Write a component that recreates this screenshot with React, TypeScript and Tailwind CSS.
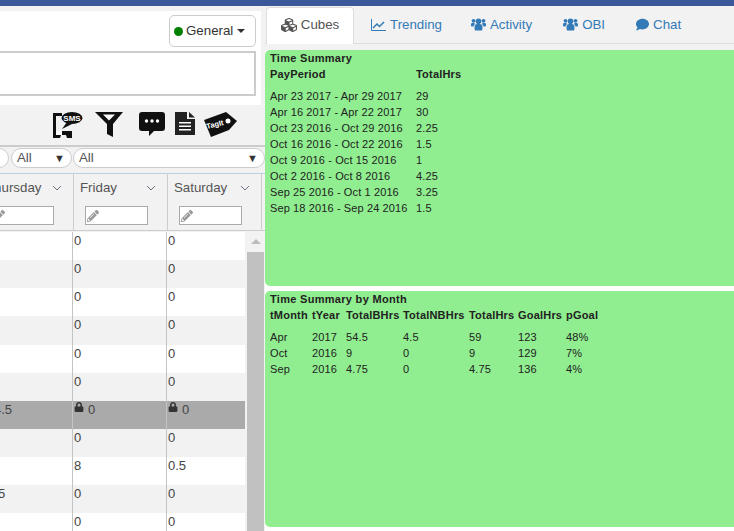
import { FaCubes, FaComment, FaPencilAlt, FaLock } from "react-icons/fa";

const timeRows = [
  ["Apr 23 2017 - Apr 29 2017", "29"],
  ["Apr 16 2017 - Apr 22 2017", "30"],
  ["Oct 23 2016 - Oct 29 2016", "2.25"],
  ["Oct 16 2016 - Oct 22 2016", "1.5"],
  ["Oct 9 2016 - Oct 15 2016", "1"],
  ["Oct 2 2016 - Oct 8 2016", "4.25"],
  ["Sep 25 2016 - Oct 1 2016", "3.25"],
  ["Sep 18 2016 - Sep 24 2016", "1.5"],
];

const monthHead = ["tMonth", "tYear", "TotalBHrs", "TotalNBHrs", "TotalHrs", "GoalHrs", "pGoal"];
const monthRows = [
  ["Apr", "2017", "54.5", "4.5", "59", "123", "48%"],
  ["Oct", "2016", "9", "0", "9", "129", "7%"],
  ["Sep", "2016", "4.75", "0", "4.75", "136", "4%"],
];

const gridRows = [
  { thu: "0", fri: "0", sat: "0", h: "h-[28px]" },
  { thu: "0", fri: "0", sat: "0", h: "h-[28px]" },
  { thu: "0", fri: "0", sat: "0", h: "h-[28px]" },
  { thu: "0", fri: "0", sat: "0", h: "h-[29px]" },
  { thu: "0", fri: "0", sat: "0", h: "h-[28px]" },
  { thu: "0", fri: "0", sat: "0", h: "h-[28px]" },
  { thu: "4.5", fri: "0", sat: "0", h: "h-[28px]", locked: true },
  { thu: "0", fri: "0", sat: "0", h: "h-[28px]" },
  { thu: "0", fri: "8", sat: "0.5", h: "h-[28px]" },
  { thu: "4.25", fri: "0", sat: "0", h: "h-[28px]" },
  { thu: "0", fri: "0", sat: "0", h: "h-[28px]" },
];

function Chevron() {
  return (
    <svg width="10" height="6" viewBox="0 0 10 6" className="text-gray-500">
      <path d="M1 1l4 4 4-4" fill="none" stroke="currentColor" strokeWidth="1" />
    </svg>
  );
}

function UsersIcon() {
  return (
    <svg width="15" height="13" viewBox="0 0 15 13" fill="currentColor">
      <circle cx="7.5" cy="3.2" r="2.8" />
      <circle cx="2.5" cy="2.8" r="1.9" />
      <circle cx="12.5" cy="2.8" r="1.9" />
      <path d="M3.6 8a2.6 2.6 0 012.6-2h2.6a2.6 2.6 0 012.6 2v3.5a1 1 0 01-1 1H4.6a1 1 0 01-1-1z" />
      <path d="M0 6.3a1.4 1.4 0 011.4-1.4h1.8c.3.5.6.8 1 1-.9.5-1.5 1.3-1.6 2.6H.9a.9.9 0 01-.9-.9zM15 6.3a1.4 1.4 0 00-1.4-1.4h-1.8c-.3.5-.6.8-1 1 .9.5 1.5 1.3 1.6 2.6h1.7a.9.9 0 00.9-.9z" />
    </svg>
  );
}

function HeaderCell({ label, border }: { label: string; border?: boolean }) {
  return (
    <div className={`w-[94px] shrink-0 h-full pt-[5px] ${border ? "border-r border-[#ccc]" : ""}`}>
      <div className="flex items-center justify-between pl-[6px] pr-[11px] h-[18px]">
        <span className="text-[13.3px] text-[#555]">{label}</span>
        <Chevron />
      </div>
      <div className="ml-[11px] mt-[9px] w-[63px] h-[19px] bg-white border border-[#aaa] flex items-center pl-[1px]">
        <FaPencilAlt className="text-[#999] text-[12px]" />
      </div>
    </div>
  );
}

function Cell({ value, locked }: { value: string; locked?: boolean }) {
  return (
    <div className="w-[94px] shrink-0 h-full border-r border-[#c4c4c4] pl-[1px] text-[13px] leading-[17px] text-[#444] flex items-start">
      {locked && <FaLock className="text-[#333] text-[10px] mt-[1px] mr-[4px]" />}
      <span>{value}</span>
    </div>
  );
}

function ActionIcons() {
  return (
    <div className="h-[40px] flex items-start pl-[53px] pt-[7px]">
      <svg width="30" height="26" viewBox="0 0 30 26" className="mr-[12px]">
        <path d="M1.5 26V2.5H9" fill="none" stroke="#111" strokeWidth="3" />
        <path d="M0 19h19v7h-5l-1-3H8l-1 3H0z" fill="#111" />
        <path d="M3 19h6v4H3z" fill="#fff" />
        <ellipse cx="19" cy="6" rx="10.5" ry="6" fill="#111" />
        <path d="M14 10l-5 7 10-5z" fill="#111" />
        <text x="19" y="8.7" textAnchor="middle" fontSize="8" fontWeight="700" fill="#fff" fontFamily="Liberation Sans Narrow, Liberation Sans">SMS</text>
      </svg>
      <svg width="29" height="26" viewBox="0 0 29 26" className="mr-[15px]">
        <path d="M0 0h28L18 12v13l-6-3V12z" fill="#111" />
        <path d="M8 2.5h12l-6 6z" fill="#fff" />
      </svg>
      <svg width="26" height="24" viewBox="0 0 26 24" className="mr-[10px]">
        <path d="M3 0h20a3 3 0 013 3v13a3 3 0 01-3 3H15l-5 5v-5H3a3 3 0 01-3-3V3a3 3 0 013-3z" fill="#111" />
        <circle cx="7.5" cy="9" r="1.7" fill="#fff" />
        <circle cx="13" cy="9" r="1.7" fill="#fff" />
        <circle cx="18.5" cy="9" r="1.7" fill="#fff" />
      </svg>
      <svg width="20" height="23" viewBox="0 0 20 23" className="mr-[9px]">
        <path d="M0 0h12v7h8v16H0z" fill="#222" />
        <path d="M14 0l6 5.5h-6z" fill="#222" />
        <path d="M4 10h12v1.5H4zM4 13.5h12V15H4zM4 17h12v1.5H4z" fill="#fff" />
      </svg>
      <svg width="33" height="25" viewBox="0 0 33 25">
        <path d="M0 8L22 0l11 9-8 9-18 7z" fill="#111" />
        <circle cx="24" cy="9" r="2.5" fill="#fff" />
        <text x="11" y="15" fontSize="7.5" fontWeight="700" fill="#fff" fontFamily="Liberation Sans" textAnchor="middle" transform="rotate(-14 11 13)">TagIt</text>
      </svg>
    </div>
  );
}

function Pill({ className }: { className: string }) {
  return (
    <div className={`h-[20px] bg-white border border-[#ccc] rounded-full flex items-center justify-between pl-[5px] pr-[6px] text-[13.3px] text-[#555] ${className}`}>
      <span>All</span>
      <span className="text-[11px] text-[#333]">▼</span>
    </div>
  );
}

function Tab({ icon, label, className }: { icon: React.ReactNode; label: string; className: string }) {
  return (
    <div className={`flex items-center gap-[4px] text-[13.3px] text-[#337ab7] pb-[1px] ${className}`}>
      {icon}
      <span>{label}</span>
    </div>
  );
}

function GreenPanel({ title, children }: { title: string; children: React.ReactNode }) {
  return (
    <div className="h-[236px] bg-[#90ee90] rounded-l-[5px] pl-[5px] text-[11px] text-[#222] tracking-[0.12px]">
      <div className="font-bold leading-[16px] tracking-[0.3px]">{title}</div>
      {children}
    </div>
  );
}

export default function App() {
  return (
    <div className="w-[734px] h-[531px] overflow-hidden bg-white flex flex-col font-['Liberation_Sans',Arial,sans-serif]">
      <div className="h-[6px] bg-[#3b5998] shrink-0" />
      <div className="flex flex-1 min-h-0">
        {/* left grid side */}
        <div className="w-[265px] shrink-0 bg-[#f2f2f2] overflow-hidden pt-[5px]">
          <div className="w-[261px] h-[94px] bg-white pt-[4px] pr-[5px] flex flex-col items-end overflow-hidden">
            <div className="w-[87px] h-[32px] border border-[#ccc] rounded-[5px] flex items-center pl-[4px] text-[13.3px] text-[#333]">
              <span className="w-[9px] h-[9px] rounded-full bg-[#008000] mr-[3px]" />
              General
              <span className="ml-[4px] w-0 h-0 border-x-[4px] border-x-transparent border-t-[4px] border-t-[#333]" />
            </div>
            <div className="w-[262px] shrink-0 h-[45px] mt-[4px] border-2 border-[#ccc] bg-white" />
          </div>
          <ActionIcons />
          <div className="h-[2px] bg-[#ccc]" />
          <div className="flex h-[20px] mt-[1px] gap-[1px] -ml-[40px]">
            <Pill className="w-[49px] shrink-0" />
            <Pill className="w-[61px] shrink-0 ml-[1px]" />
            <Pill className="w-[192px] shrink-0" />
          </div>
          <div className="mt-[5px] h-[58px] border-t border-[#b8cfe0] border-b border-b-[#ccc] flex -ml-[20px]">
            <HeaderCell label="Thursday" border />
            <HeaderCell label="Friday" border />
            <HeaderCell label="Saturday" border />
          </div>
          <div className="flex">
            <div className="w-[245px] shrink-0 overflow-hidden mt-[1px]">
              {gridRows.map((r, i) => (
                <div
                  key={i}
                  className={`flex -ml-[21px] ${r.h} ${r.locked ? "bg-[#aaaaaa]" : i % 2 ? "bg-[#f2f2f2]" : "bg-white"}`}
                >
                  <Cell value={r.thu} locked={r.locked} />
                  <Cell value={r.fri} locked={r.locked} />
                  <Cell value={r.sat} locked={r.locked} />
                </div>
              ))}
            </div>
            <div className="w-[17px] ml-[2px] shrink-0 flex flex-col">
              <div className="h-[21px] flex justify-center items-center">
                <span className="w-0 h-0 border-x-[5px] border-x-transparent border-b-[5px] border-b-[#bbb]" />
              </div>
              <div className="flex-1 h-[300px] bg-[#c1c1c1]" />
            </div>
          </div>
        </div>

        {/* right side */}
        <div className="flex-1 min-w-0 flex flex-col">
          <div className="h-[38px] bg-[#f2f2f2] flex items-stretch shrink-0 pt-[1px] border-b border-[#ddd]">
            <div className="w-[88px] ml-[1px] bg-white border border-b-0 border-[#ddd] rounded-t-[4px] flex items-center justify-center gap-[4px] text-[13.3px] text-[#555] -mb-[1px] pb-[2px]">
              <FaCubes className="text-[16px]" />
              <span>Cubes</span>
            </div>
            <Tab
              className="ml-[17px]"
              label="Trending"
              icon={
                <svg width="15" height="12" viewBox="0 0 15 12">
                  <path d="M.5 0v11.5H15" fill="none" stroke="currentColor" />
                  <path d="M2 9l4-4 2.5 2.5L13 3" fill="none" stroke="currentColor" strokeWidth="1.5" />
                </svg>
              }
            />
            <Tab className="ml-[29px]" label="Activity" icon={<UsersIcon />} />
            <Tab className="ml-[31px]" label="OBI" icon={<UsersIcon />} />
            <Tab className="ml-[31px]" label="Chat" icon={<FaComment className="text-[13px]" />} />
          </div>
          <div className="h-[6px] shrink-0 bg-[#f2f2f2]" />
          <GreenPanel title="Time Summary">
            <div className="grid grid-cols-[146px_1fr] leading-[16px] font-bold tracking-[0.2px]">
              <span>PayPeriod</span>
              <span>TotalHrs</span>
            </div>
            <div className="grid grid-cols-[146px_1fr] leading-[16px] mt-[6px]">
              {timeRows.flat().map((c, i) => (
                <span key={i}>{c}</span>
              ))}
            </div>
          </GreenPanel>
          <div className="h-[5px] shrink-0" />
          <GreenPanel title="Time Summary by Month">
            <div className="grid grid-cols-[42px_34px_57px_66px_49px_48px_1fr] leading-[16px] font-bold tracking-[0.2px]">
              {monthHead.map((c) => (
                <span key={c}>{c}</span>
              ))}
            </div>
            <div className="grid grid-cols-[42px_34px_57px_66px_49px_48px_1fr] leading-[16px] mt-[6px]">
              {monthRows.flat().map((c, i) => (
                <span key={i}>{c}</span>
              ))}
            </div>
          </GreenPanel>
        </div>
      </div>
    </div>
  );
}
